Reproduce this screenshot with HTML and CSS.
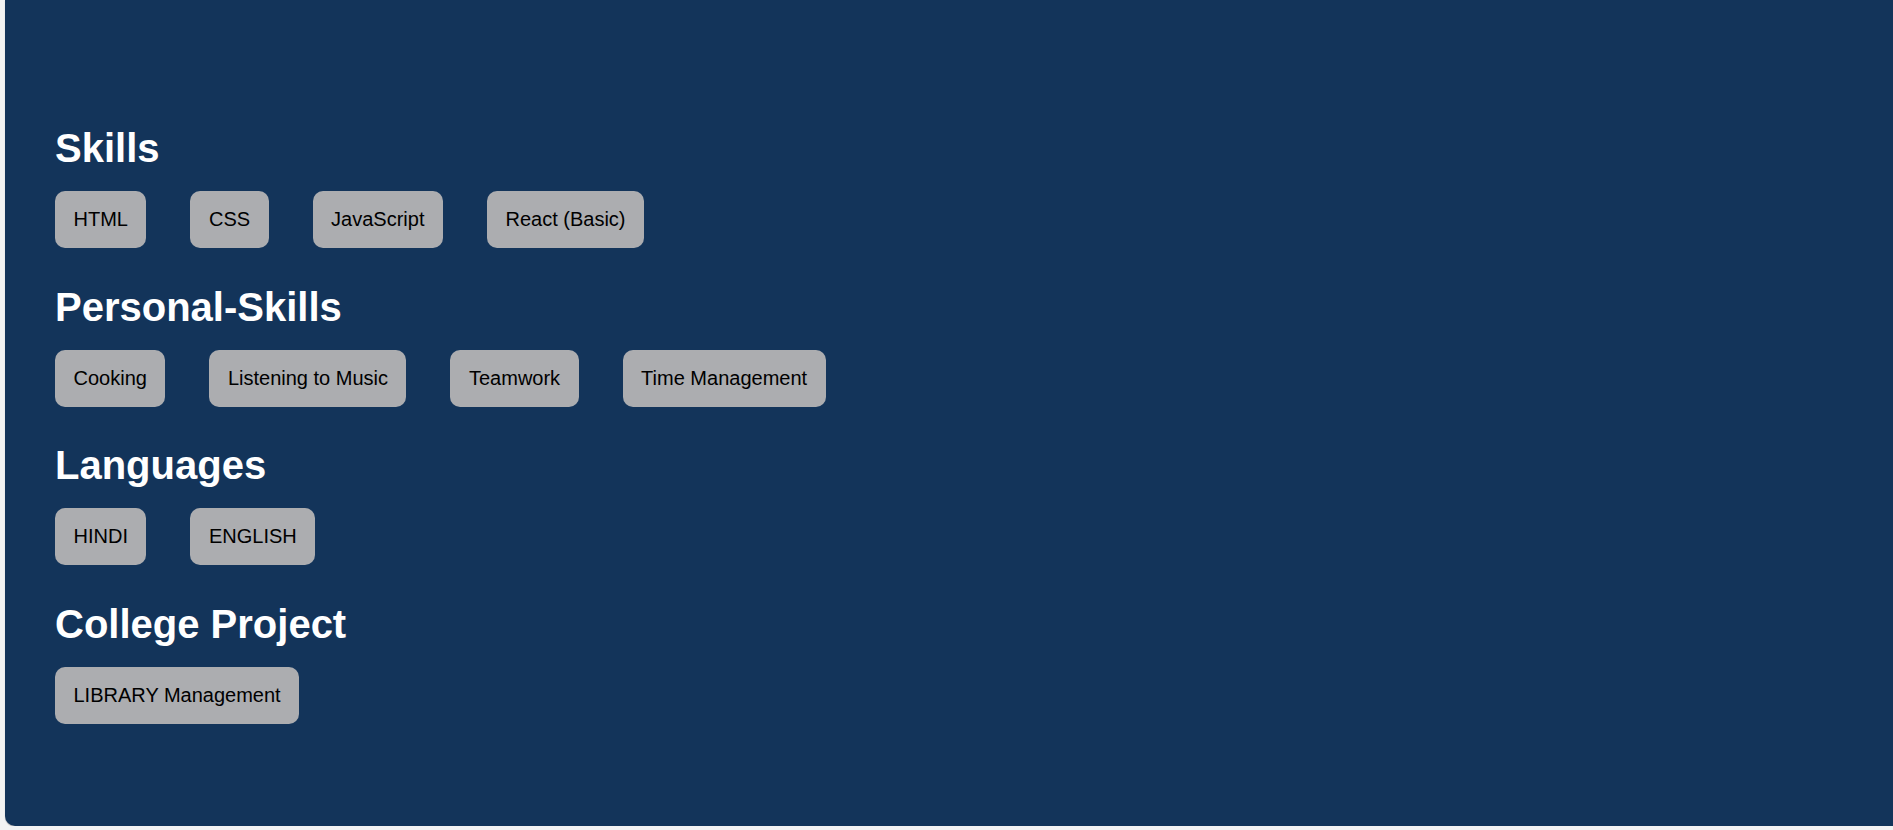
FILE: index.html
```html
<!DOCTYPE html>
<html lang="en">
<head>
<meta charset="utf-8">
<title>Skills</title>
<link rel="stylesheet" href="styles.css">
</head>
<body>
<main class="panel">
  <section class="group">
    <h2 class="group-title">Skills</h2>
    <div class="tags">
      <span class="tag">HTML</span>
      <span class="tag">CSS</span>
      <span class="tag">JavaScript</span>
      <span class="tag">React (Basic)</span>
    </div>
  </section>
  <section class="group">
    <h2 class="group-title">Personal-Skills</h2>
    <div class="tags">
      <span class="tag">Cooking</span>
      <span class="tag">Listening to Music</span>
      <span class="tag">Teamwork</span>
      <span class="tag">Time Management</span>
    </div>
  </section>
  <section class="group">
    <h2 class="group-title">Languages</h2>
    <div class="tags">
      <span class="tag">HINDI</span>
      <span class="tag">ENGLISH</span>
    </div>
  </section>
  <section class="group">
    <h2 class="group-title">College Project</h2>
    <div class="tags">
      <span class="tag">LIBRARY Management</span>
    </div>
  </section>
</main>
</body>
</html>
```

FILE: styles.css
```css
html, body {
  margin: 0;
  padding: 0;
}

body {
  background: #f3f3f3;
  font-family: "Liberation Sans", Arial, sans-serif;
  overflow: hidden;
}

.panel {
  display: flex;
  flex-direction: column;
  gap: 35.5px;
  margin: 0 0 0 5px;
  padding: 125px 50px 102px 50px;
  background: #13345a;
  border-radius: 0 0 0 10px;
  box-shadow: 0 1px 1px rgba(0, 0, 0, 0.25);
}

.group {
  display: flex;
  flex-direction: column;
  gap: 20px;
}

.group-title {
  margin: 0;
  color: #ffffff;
  font-size: 40px;
  font-weight: 700;
  line-height: 46px;
}

.tags {
  display: flex;
  flex-wrap: wrap;
  gap: 44px;
}

.tag {
  display: inline-block;
  padding: 17px 18.5px;
  background: #acadb0;
  color: #000000;
  font-size: 20px;
  line-height: 23px;
  border-radius: 10px;
}
```
